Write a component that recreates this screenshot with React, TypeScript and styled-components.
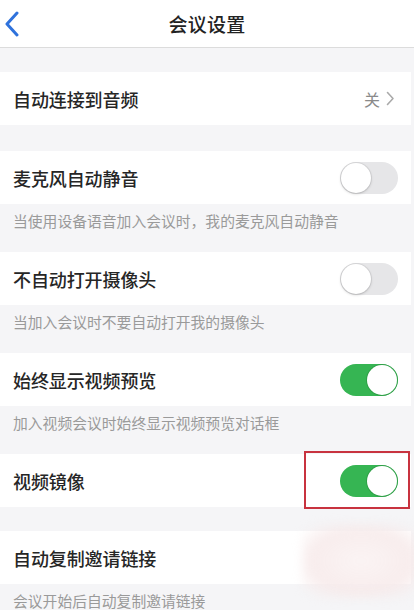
import React from "react";
import styled, { createGlobalStyle } from "styled-components";

const Global = createGlobalStyle`
  html, body { margin: 0; padding: 0; background: #f5f5f7; }
  body { font-family: "Noto Sans CJK SC", "Noto Sans", sans-serif; }
  * { box-sizing: border-box; }
`;

const Page = styled.div`
  position: relative;
  width: 414px;
  height: 610px;
  overflow: hidden;
  background: #f5f5f7;
  display: flex;
  flex-direction: column;
  padding-right: 3px;
  & > * { flex-shrink: 0; }
`;

const Header = styled.header`
  position: relative;
  height: 48px;
  display: flex;
  align-items: center;
  justify-content: center;
  background: #fff;
  border-bottom: 1.5px solid #dcdcdc;
  margin-right: -3px;
`;

const BackButton = styled.div`
  position: absolute;
  left: 4px;
  top: 10px;
  width: 18px;
  height: 28px;
  display: flex;
  align-items: center;
`;

const Title = styled.h1`
  margin: 0;
  font-size: 19px;
  font-weight: 500;
  color: #222;
  letter-spacing: 0.3px;
`;

const Gap = styled.div<{ $h: number }>`
  height: ${(p) => p.$h}px;
`;

const Row = styled.div`
  height: 53px;
  background: #fff;
  display: flex;
  align-items: center;
  justify-content: space-between;
  padding: 0 12px 0 13px;
`;

const Label = styled.span`
  font-size: 18px;
  font-weight: 500;
  color: #262626;
  letter-spacing: -0.1px;
`;

const Desc = styled.div`
  height: 48px;
  padding: 6px 0 0 13px;
  font-size: 14.8px;
  color: #9a9a9a;
  line-height: 22px;
`;

const Value = styled.span`
  display: flex;
  align-items: center;
  gap: 6px;
  font-size: 16px;
  color: #8a8a8a;
  padding-right: 4px;
`;

const Track = styled.div<{ $on: boolean }>`
  position: relative;
  width: 58px;
  height: 32px;
  border-radius: 16px;
  background: ${(p) => (p.$on ? "#36b553" : "#e6e6e8")};
  margin-right: 1px;
`;

const Knob = styled.div<{ $on: boolean }>`
  position: absolute;
  top: 1px;
  left: ${(p) => (p.$on ? "27px" : "1px")};
  width: 30px;
  height: 30px;
  border-radius: 50%;
  background: #fff;
  box-shadow: ${(p) =>
    p.$on ? "0 0 0 1px rgba(40,140,60,0.5)" : "0 1px 3px rgba(0,0,0,0.18), 0 0 0 1px rgba(0,0,0,0.06)"};
`;

const Highlight = styled.div`
  position: absolute;
  left: 304px;
  top: 451px;
  width: 106px;
  height: 58px;
  border: 2px solid #c8333f;
  pointer-events: none;
`;

const Smudge = styled.div`
  position: absolute;
  left: 302px;
  top: 524px;
  width: 118px;
  height: 74px;
  background: radial-gradient(ellipse at 50% 50%, rgba(250, 242, 242, 0.85) 0%, rgba(246, 232, 232, 0.8) 60%, rgba(246, 236, 236, 0) 92%);
  filter: blur(5px);
  pointer-events: none;
`;

const Switch = ({ on }: { on: boolean }) => (
  <Track $on={on}>
    <Knob $on={on} />
  </Track>
);

type Item = { label: string; desc?: string; on: boolean; gapBefore?: number; noSwitch?: boolean };

const items: Item[] = [
  { label: "麦克风自动静音", desc: "当使用设备语音加入会议时，我的麦克风自动静音", on: false },
  { label: "不自动打开摄像头", desc: "当加入会议时不要自动打开我的摄像头", on: false },
  { label: "始终显示视频预览", desc: "加入视频会议时始终显示视频预览对话框", on: true },
  { label: "视频镜像", on: true },
  { label: "自动复制邀请链接", desc: "会议开始后自动复制邀请链接", on: false, gapBefore: 24, noSwitch: true },
];

export default function App() {
  return (
    <>
      <Global />
      <Page>
        <Header>
          <BackButton>
            <svg width="16" height="26" viewBox="0 0 16 26">
              <path d="M13 2 L3 13 L13 24" fill="none" stroke="#2f72dc" strokeWidth="3" strokeLinecap="round" strokeLinejoin="round" />
            </svg>
          </BackButton>
          <Title>会议设置</Title>
        </Header>
        <Gap $h={24} />
        <Row>
          <Label>自动连接到音频</Label>
          <Value>
            关
            <svg width="9" height="15" viewBox="0 0 9 15">
              <path d="M1.5 1.5 L7 7.5 L1.5 13.5" fill="none" stroke="#aaa" strokeWidth="1.6" strokeLinecap="round" strokeLinejoin="round" />
            </svg>
          </Value>
        </Row>
        <Gap $h={26} />
        {items.map((it) => (
          <React.Fragment key={it.label}>
            {it.gapBefore ? <Gap $h={it.gapBefore} /> : null}
            <Row>
              <Label>{it.label}</Label>
              {it.noSwitch ? null : <Switch on={it.on} />}
            </Row>
            {it.desc ? <Desc>{it.desc}</Desc> : null}
          </React.Fragment>
        ))}
        <Highlight />
        <Smudge />
      </Page>
    </>
  );
}
